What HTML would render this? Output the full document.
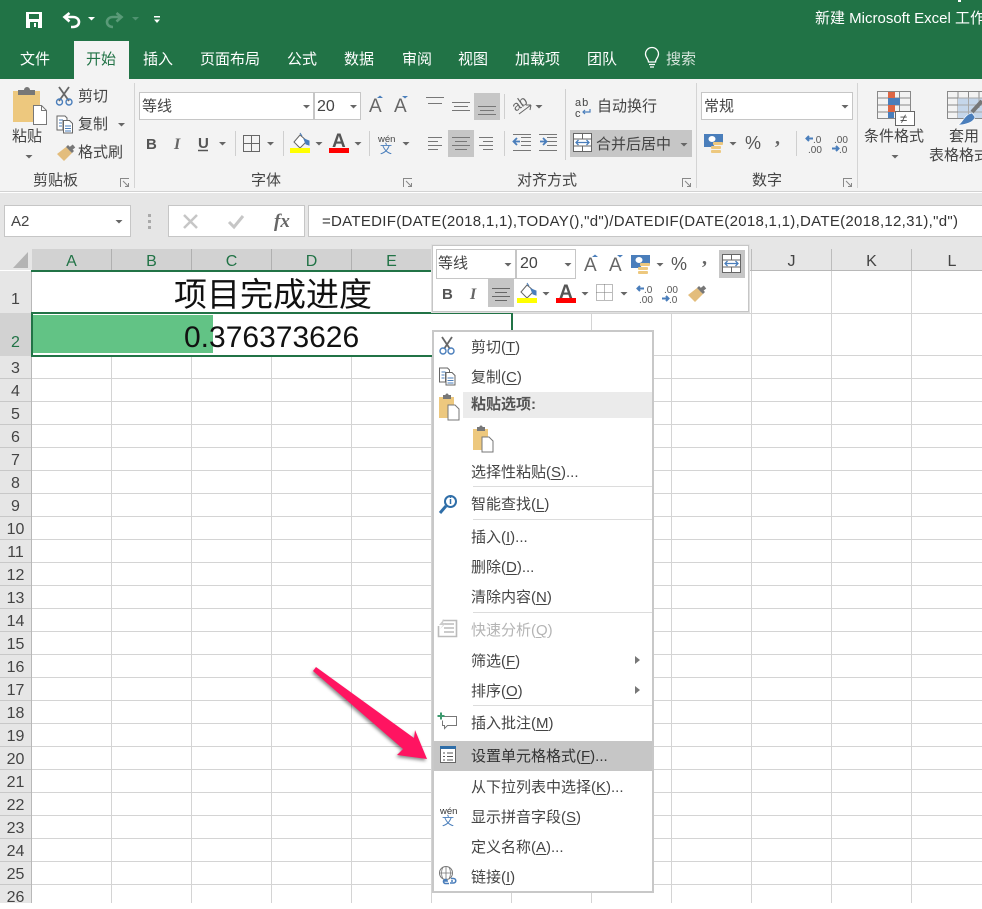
<!DOCTYPE html>
<html lang="zh"><head><meta charset="utf-8"><title>Excel</title>
<style>
html,body{margin:0;padding:0}
body{position:relative;width:982px;height:903px;overflow:hidden;background:#fff;font-family:"Liberation Sans","Noto Sans CJK SC",sans-serif;color:#444;font-size:15px}
.b{position:absolute;box-sizing:border-box}
.t{position:absolute;white-space:nowrap;line-height:20px;height:20px;margin-top:1px}
.w{color:#fff}
.box{background:#fff;border:1px solid #c6c6c6}
.on{background:#c6c6c6}
.cl{position:absolute;top:249px;height:21px;width:80px;text-align:center;line-height:25px;font-size:16px;color:#444;box-sizing:border-box;border-right:1px solid #bcbcbc}
.s{background:#d2d2d2;color:#217346;border-right:1px solid #b0b0b0}
.r{position:absolute;left:0;width:31px;text-align:center;font-size:16px;line-height:22px;height:22px;color:#444;margin-top:1px}
.m{position:absolute;left:471px;white-space:nowrap;line-height:20px;height:20px;color:#444;margin-top:2px}
.sep{position:absolute;left:473px;width:179px;height:1px;background:#dcdcdc}
u{text-underline-offset:2px}
</style></head><body>

<!-- grid -->
<div class="b" style="left:0;top:271px;width:982px;height:632px;background:repeating-linear-gradient(to right,transparent 0 31px,#d4d4d4 31px 32px,transparent 32px 111px,#d4d4d4 111px 112px,transparent 112px 191px,#d4d4d4 191px 192px,transparent 192px 271px,#d4d4d4 271px 272px,transparent 272px 351px,#d4d4d4 351px 352px,transparent 352px 431px,#d4d4d4 431px 432px,transparent 432px 511px,#d4d4d4 511px 512px,transparent 512px 591px,#d4d4d4 591px 592px,transparent 592px 671px,#d4d4d4 671px 672px,transparent 672px 751px,#d4d4d4 751px 752px,transparent 752px 831px,#d4d4d4 831px 832px,transparent 832px 911px,#d4d4d4 911px 912px,transparent 912px 982px)"></div>
<div class="b" style="left:0;top:356px;width:982px;height:547px;background:repeating-linear-gradient(to bottom,transparent 0 22px,#d4d4d4 22px 23px)"></div>
<div class="b" style="left:512px;top:313px;width:470px;height:1px;background:#d4d4d4"></div>
<div class="b" style="left:512px;top:355px;width:470px;height:1px;background:#d4d4d4"></div>
<div class="b" style="left:32px;top:271px;width:479px;height:42px;background:#fff"></div>

<!-- header strip -->
<div class="b" style="left:0;top:193px;width:982px;height:56px;background:#e6e6e6"></div>
<div class="b" style="left:0;top:249px;width:982px;height:21px;background:#e6e6e6"></div>
<div class="b" style="left:0;top:271px;width:31px;height:632px;background:#e6e6e6;border-right:1px solid #b8b8b8;box-sizing:content-box"></div>
<div class="b" style="left:0;top:313px;width:31px;height:43px;background:#d2d2d2"></div>
<div class="b" style="left:0;top:356px;width:31px;height:547px;background:repeating-linear-gradient(to bottom,transparent 0 22px,#c8c8c8 22px 23px)"></div>

<div class="cl s" style="left:32px">A</div><div class="cl s" style="left:112px">B</div><div class="cl s" style="left:192px">C</div><div class="cl s" style="left:272px">D</div><div class="cl s" style="left:352px">E</div>
<div class="cl" style="left:432px">F</div><div class="cl" style="left:512px">G</div><div class="cl" style="left:592px">H</div><div class="cl" style="left:672px">I</div><div class="cl" style="left:752px">J</div><div class="cl" style="left:832px">K</div><div class="cl" style="left:912px;border:0">L</div>
<div class="b" style="left:31px;top:270px;width:481px;height:2px;background:#217346"></div>
<div class="b" style="left:512px;top:270px;width:470px;height:1px;background:#b8b8b8"></div>

<div class="r" style="top:288px">1</div>
<div class="r" style="top:331px;color:#217346">2</div>
<div class="r" style="top:357px">3</div><div class="r" style="top:380px">4</div><div class="r" style="top:403px">5</div><div class="r" style="top:426px">6</div><div class="r" style="top:449px">7</div><div class="r" style="top:472px">8</div><div class="r" style="top:495px">9</div><div class="r" style="top:518px">10</div><div class="r" style="top:541px">11</div><div class="r" style="top:564px">12</div><div class="r" style="top:587px">13</div><div class="r" style="top:610px">14</div><div class="r" style="top:633px">15</div><div class="r" style="top:656px">16</div><div class="r" style="top:679px">17</div><div class="r" style="top:702px">18</div><div class="r" style="top:725px">19</div><div class="r" style="top:748px">20</div><div class="r" style="top:771px">21</div><div class="r" style="top:794px">22</div><div class="r" style="top:817px">23</div><div class="r" style="top:840px">24</div><div class="r" style="top:863px">25</div><div class="r" style="top:886px">26</div>

<!-- cells -->
<div class="t" style="left:174px;top:274px;line-height:40px;height:40px;font-size:33px;color:#111">项目完成进度</div>
<div class="b" style="left:31px;top:312px;width:482px;height:45px;border:2px solid #217346;background:#fff"></div>
<div class="b" style="left:33px;top:315px;width:180px;height:38px;background:#62c385"></div>
<div class="t" style="left:184px;top:317px;line-height:40px;height:40px;font-size:30px;color:#111">0.376373626</div>

<!-- title + tabs -->
<div class="b" style="left:0;top:0;width:982px;height:79px;background:#217346"></div>
<div class="b" style="left:958px;top:0;width:3px;height:2px;background:#fff"></div>
<div class="t w" style="left:815px;top:8px">新建 Microsoft Excel 工作簿</div>
<div class="b" style="left:74px;top:41px;width:55px;height:38px;background:#f3f3f3"></div>
<div class="t w" style="left:20px;top:49px">文件</div>
<div class="t" style="left:86px;top:49px;color:#217346">开始</div>
<div class="t w" style="left:143px;top:49px">插入</div>
<div class="t w" style="left:200px;top:49px">页面布局</div>
<div class="t w" style="left:287px;top:49px">公式</div>
<div class="t w" style="left:344px;top:49px">数据</div>
<div class="t w" style="left:402px;top:49px">审阅</div>
<div class="t w" style="left:458px;top:49px">视图</div>
<div class="t w" style="left:515px;top:49px">加载项</div>
<div class="t w" style="left:587px;top:49px">团队</div>
<div class="t" style="left:666px;top:49px;color:#d5e4db">搜索</div>

<!-- ribbon -->
<div class="b" style="left:0;top:79px;width:982px;height:113px;background:#f3f3f3;border-bottom:1px solid #d2d2d2"></div>
<div class="b" style="left:134px;top:83px;width:1px;height:105px;background:#d4d4d4"></div>
<div class="b" style="left:696px;top:83px;width:1px;height:105px;background:#d4d4d4"></div>
<div class="b" style="left:857px;top:83px;width:1px;height:105px;background:#d4d4d4"></div>
<div class="b" style="left:235px;top:131px;width:1px;height:25px;background:#cfcfcf"></div>
<div class="b" style="left:283px;top:131px;width:1px;height:25px;background:#cfcfcf"></div>
<div class="b" style="left:369px;top:131px;width:1px;height:25px;background:#cfcfcf"></div>
<div class="b" style="left:504px;top:94px;width:1px;height:25px;background:#cfcfcf"></div>
<div class="b" style="left:504px;top:131px;width:1px;height:25px;background:#cfcfcf"></div>
<div class="b" style="left:565px;top:89px;width:1px;height:71px;background:#cfcfcf"></div>
<div class="b" style="left:796px;top:131px;width:1px;height:25px;background:#cfcfcf"></div>

<div class="t" style="left:12px;top:126px">粘贴</div>
<div class="t" style="left:78px;top:86px">剪切</div>
<div class="t" style="left:78px;top:114px">复制</div>
<div class="t" style="left:78px;top:142px">格式刷</div>
<div class="t" style="left:33px;top:170px">剪贴板</div>
<div class="t" style="left:251px;top:170px">字体</div>
<div class="t" style="left:517px;top:170px">对齐方式</div>
<div class="t" style="left:752px;top:170px">数字</div>

<div class="b box" style="left:139px;top:92px;width:175px;height:28px"></div>
<div class="b box" style="left:314px;top:92px;width:47px;height:28px"></div>
<div class="t" style="left:142px;top:96px">等线</div>
<div class="t" style="left:317px;top:96px;font-size:16px">20</div>

<div class="b on" style="left:474px;top:93px;width:26px;height:27px"></div>
<div class="b on" style="left:448px;top:130px;width:26px;height:27px"></div>
<div class="b on" style="left:570px;top:130px;width:122px;height:27px"></div>
<div class="t" style="left:597px;top:96px">自动换行</div>
<div class="t" style="left:596px;top:134px">合并后居中</div>
<div class="b box" style="left:701px;top:92px;width:152px;height:28px"></div>
<div class="t" style="left:704px;top:96px">常规</div>
<div class="t" style="left:745px;top:132px;font-size:18px;color:#555">%</div>
<div class="t" style="left:864px;top:126px">条件格式</div>
<div class="t" style="left:949px;top:126px">套用</div>
<div class="t" style="left:929px;top:145px">表格格式</div>

<!-- formula bar -->
<div class="b box" style="left:4px;top:205px;width:127px;height:32px"></div>
<div class="t" style="left:11px;top:211px;font-size:15px">A2</div>
<div class="b box" style="left:168px;top:205px;width:137px;height:32px"></div>
<div class="b box" style="left:308px;top:205px;width:680px;height:32px"></div>

<!-- mini toolbar -->
<div class="b" style="left:432px;top:245px;width:317px;height:67px;background:#fff;border:1px solid #c6c6c6;box-shadow:0 0 0 1px #e0e0e0"></div>
<div class="b box" style="left:436px;top:249px;width:80px;height:30px"></div>
<div class="b box" style="left:516px;top:249px;width:60px;height:30px"></div>
<div class="t" style="left:438px;top:253px">等线</div>
<div class="t" style="left:520px;top:253px;font-size:16px">20</div>
<div class="b on" style="left:719px;top:250px;width:26px;height:28px"></div>
<div class="b on" style="left:488px;top:279px;width:26px;height:28px"></div>
<div class="t" style="left:671px;top:253px;font-size:18px;color:#555">%</div>

<!-- context menu -->
<div class="b" style="left:432px;top:330px;width:222px;height:563px;background:#fff;border:2px solid #c8c8c8"></div>
<div class="b" style="left:463px;top:392px;width:189px;height:26px;background:#ebebeb"></div>
<div class="b" style="left:434px;top:741px;width:218px;height:30px;background:#c6c6c6"></div>
<div class="sep" style="top:486px"></div><div class="sep" style="top:519px"></div><div class="sep" style="top:612px"></div><div class="sep" style="top:705px"></div>
<div class="m" style="top:336px">剪切(<u>T</u>)</div>
<div class="m" style="top:366px">复制(<u>C</u>)</div>
<div class="m" style="top:393px;font-weight:bold;color:#555">粘贴选项:</div>
<div class="m" style="top:461px">选择性粘贴(<u>S</u>)...</div>
<div class="m" style="top:493px">智能查找(<u>L</u>)</div>
<div class="m" style="top:526px">插入(<u>I</u>)...</div>
<div class="m" style="top:556px">删除(<u>D</u>)...</div>
<div class="m" style="top:586px">清除内容(<u>N</u>)</div>
<div class="m" style="top:619px;color:#b4b4b4">快速分析(<u>Q</u>)</div>
<div class="m" style="top:650px">筛选(<u>F</u>)</div>
<div class="m" style="top:680px">排序(<u>O</u>)</div>
<div class="m" style="top:712px">插入批注(<u>M</u>)</div>
<div class="m" style="top:745px;color:#333">设置单元格格式(<u>F</u>)...</div>
<div class="m" style="top:776px">从下拉列表中选择(<u>K</u>)...</div>
<div class="m" style="top:806px">显示拼音字段(<u>S</u>)</div>
<div class="m" style="top:836px">定义名称(<u>A</u>)...</div>
<div class="m" style="top:866px">链接(<u>I</u>)</div>

<!-- icons -->
<svg class="b" style="left:0;top:0" width="982" height="903" viewBox="0 0 982 903" font-family="Liberation Sans,Noto Sans CJK SC,sans-serif">
<defs>
<path id="c" d="M0 0h7l-3.5 3.5z" fill="#666"/>
<g id="brush"><path d="M12 5l5-4" stroke="#777" stroke-width="4" fill="none"/><path d="M0 9l9-7 6 6-8 8z" fill="#e3bd7c"/><path d="M9 2l6 6 2-2-6-6z" fill="#777"/></g>
<g id="clip"><path d="M0 4h15v21H0z" fill="#edc87e"/><path d="M4 2h2.500a1.500 1.500 0 0 1 3 0H12v4H4z" fill="#777"/><path d="M9 12h7l4 4v11H9z" fill="#fff" stroke="#777"/></g>
<g id="money"><path d="M0 0h19v10h-8l-2 3H0z" fill="#4a7ebb"/><ellipse cx="8" cy="5" rx="3.500" ry="3" fill="#fff"/><g fill="#edc87e"><rect x="9" y="8" width="10" height="3" rx="1"/><rect x="7" y="12" width="10" height="3" rx="1"/><rect x="7" y="16" width="10" height="3" rx="1"/></g></g>
<g id="merge"><path d="M.5.5h18v18H.5z" fill="#fff"/><path d="M.5.5h18v18H.5zM.5 6h18M.5 13h18M9.500.5V6M9.500 13v5.500" fill="none" stroke="#666"/><path d="M3 9.500h13M5.500 7l-2.500 2.500 2.500 2.500M13.500 7l2.500 2.500-2.500 2.500" fill="none" stroke="#4a7ebb" stroke-width="1.300"/></g>
<g id="dec1" font-size="10" fill="#555"><path d="M8 3.500H1.500M4 1L1.500 3.500 4 6" fill="none" stroke="#4a7ebb" stroke-width="2"/><text x="8" y="8">.0</text><text x="3" y="18">.00</text></g>
<g id="dec2" font-size="10" fill="#555"><text x="3" y="8">.00</text><path d="M1 13.500h6.500M5 11l2.500 2.500L5 16" fill="none" stroke="#4a7ebb" stroke-width="2"/><text x="8" y="18">.0</text></g>
<g id="fill"><path d="M8 2l-6 7 6 6 7-7z" fill="#fff" stroke="#666"/><path d="M8 0l2 3M12 6l5 2 0 4-3-1z" fill="#4a7ebb" stroke="#4a7ebb"/></g>
</defs>

<!-- QAT -->
<path fill="#fff" fill-rule="evenodd" d="M26 12h16v16H26zM29 14v5h10v-5zM30 22v6h8v-6z"/>
<path d="M34 23h2v4h-2z" fill="#fff"/>
<path d="M66 17h7c4 0 6 2.500 6 5s-2 5-6 5h-2M69.500 13l-5 4 5 4.500" fill="none" stroke="#fff" stroke-width="2.600"/>
<path d="M88 17h7l-3.500 3.500z" fill="#fff"/>
<path d="M120 17h-7c-4 0-6 2.500-6 5s2 5 6 5h0M116.500 13l5 4-5 4.500" fill="none" stroke="#5a9a78" stroke-width="2.600"/>
<path d="M132 17h7l-3.500 3.500z" fill="#4f9270"/>
<path d="M154 16h6v1.500h-6zM154 19.500h6l-3 3.500z" fill="#fff"/>
<!-- bulb -->
<path d="M648.500 62c0-3-3-4.500-3-8a6.500 6.500 0 0 1 13 0c0 3.500-3 5-3 8zM649 64.500h6M650 67h4" fill="none" stroke="#fff" stroke-width="1.300"/>

<!-- paste -->
<path d="M13 91h27v31H13z" fill="#edc87e"/>
<path d="M18 90h6a3 3 0 0 1 6 0h5v5H18z" fill="#777"/>
<path d="M33.500 105.500h8l5 5v14h-13z" fill="#fff" stroke="#777"/>
<path d="M41.500 105.500v5h5" fill="none" stroke="#777"/>
<use href="#c" x="25.500" y="155"/>
<!-- scissors -->
<path d="M59 87l10 14M69 87L59 101" stroke="#666" stroke-width="1.800" fill="none"/>
<circle cx="59.500" cy="102" r="3" fill="none" stroke="#4a7ebb" stroke-width="1.400"/><circle cx="69" cy="102" r="3" fill="none" stroke="#4a7ebb" stroke-width="1.400"/>
<!-- copy -->
<path d="M57 116h8l2 2v3h-4v9h-6z" fill="#fff" stroke="#666"/><path d="M63.500 120.500h6l3 3v9.500h-9z" fill="#fff" stroke="#666"/>
<path d="M65 126h6M65 128.500h6M65 131h6M59 120h4M59 123h3M59 126h3" stroke="#4a7ebb"/>
<use href="#c" x="118" y="123"/>
<use href="#brush" x="57" y="145"/>
<!-- launchers -->
<g fill="none" stroke="#888"><path d="M120.500 187v-8.500h8.500M123 181l5 5M128.500 183v3.500H125"/><path d="M403.500 187v-8.500h8.500M406 181l5 5M411.500 183v3.500H408M682.500 187v-8.500h8.500M685 181l5 5M690.500 183v3.500H687M843.500 187v-8.500h8.500M846 181l5 5M851.500 183v3.500H848"/></g>

<!-- font row -->
<use href="#c" x="303" y="105"/><use href="#c" x="350" y="105"/>
<text x="369" y="112" font-size="19" fill="#666">A</text><path d="M377 98l3-2.500 3 2.500z" fill="#4a7ebb"/>
<text x="394" y="112" font-size="19" fill="#666">A</text><path d="M402 96h6l-3 2.500z" fill="#4a7ebb"/>
<text x="146" y="149" font-size="15" font-weight="bold" fill="#555">B</text>
<text x="174" y="149" font-size="16" font-style="italic" font-weight="bold" fill="#666" font-family="Liberation Serif">I</text>
<text x="198" y="148" font-size="15" font-weight="bold" fill="#555">U</text><path d="M198 150.500h10" stroke="#555" stroke-width="1.500"/>
<use href="#c" x="219" y="142"/>
<path d="M243.500 135.500h16v16h-16zM251.500 135.500v16M243.500 143.500h16" fill="none" stroke="#666"/>
<use href="#c" x="267" y="142"/>
<use href="#fill" x="292" y="133"/><path d="M290 148h20v5h-20z" fill="#ff0"/>
<use href="#c" x="315.500" y="142"/>
<text x="332" y="147" font-size="19" font-weight="bold" fill="#555">A</text><path d="M329 148h20v5h-20z" fill="#f00"/>
<use href="#c" x="354.500" y="142"/>
<text x="378" y="142" font-size="9.500" fill="#444">wén</text><text x="380" y="153" font-size="12" fill="#4a7ebb">文</text>
<use href="#c" x="402.500" y="142"/>

<!-- align -->
<g fill="none" stroke="#777">
<path d="M426 97.500h18M428 103.500h14"/>
<path d="M452 102.500h18M454 106.500h14M452 110.500h18"/>
<path d="M478 106.500h18M480 110.500h14M478 114.500h18"/>
<path d="M428 137.500h14M428 141.500h10M428 145.500h14M428 149.500h10"/>
<path d="M452 137.500h18M455 141.500h12M452 145.500h18M455 149.500h12"/>
<path d="M479 137.500h14M483 141.500h10M479 145.500h14M483 149.500h10"/>
<path d="M521 137.500h10M521 141.500h10M521 145.500h10M513 150.500h18M513 134.500h18M547 137.500h10M547 141.500h10M547 145.500h10M539 150.500h18M539 134.500h18"/>
</g>
<path d="M520 141.500h-6M517 138l-3.500 3.500 3.500 3.500" fill="none" stroke="#4a7ebb" stroke-width="1.800"/>
<path d="M540 141.500h6M543 138l3.500 3.500-3.500 3.500" fill="none" stroke="#4a7ebb" stroke-width="1.800"/>
<text x="512" y="108" font-size="14" fill="#666" transform="rotate(-35 520 104)">ab</text>
<path d="M519 114l12-9M531 105l-5 0M531 105l-1 5" fill="none" stroke="#666"/>
<use href="#c" x="535.500" y="105"/>
<text x="575" y="106" font-size="11" fill="#444" letter-spacing="1">ab</text><text x="575" y="117" font-size="11" fill="#444">c</text>
<path d="M590 109v3h-7M585 110l-2 2 2 2" fill="none" stroke="#4a7ebb" stroke-width="1.200"/>
<use href="#merge" x="573" y="133"/>
<use href="#c" x="680.500" y="143"/>

<!-- number -->
<use href="#c" x="841.500" y="105"/>
<use href="#money" x="704" y="134"/>
<use href="#c" x="729.500" y="142"/>
<text x="775" y="144" font-size="20" font-weight="bold" fill="#666" font-family="Liberation Serif">,</text>
<use href="#dec1" x="805" y="135"/><use href="#dec2" x="831" y="135"/>

<!-- CF -->
<path d="M877.500 91.500h33v27h-33zM877.500 98h33M877.500 105h33M877.500 112h33M888.500 91.500v27M899.500 91.500v27" fill="none" stroke="#888"/>
<path d="M888 92h7v6h-7zM888 105h7v7h-7z" fill="#dd6644"/><path d="M888 98h12v7h-12zM888 112h6v6h-6z" fill="#4a7ebb"/>
<path d="M895.500 111.500h19v14h-19z" fill="#fff" stroke="#666"/>
<text x="900" y="123" font-size="13" fill="#444">≠</text>
<use href="#c" x="891.500" y="155"/>
<!-- table style -->
<path d="M947.500 91.500h40v27h-40zM947.500 98h40M947.500 105h40M947.500 112h40M958 91.500v27M968.500 91.500v27M979 91.500v27" fill="none" stroke="#888"/>
<path d="M958 98h24v20h-24z" fill="#c5d6ea"/>
<path d="M958 98h24M958 105h24M958 112h24M968.500 98v20M979 98v10" stroke="#a8a8a8" fill="none"/>
<path d="M972 112l10-11" stroke="#777" stroke-width="4"/>
<path d="M957 125c6-1 6-10 15-12l3 4c-1 5-9 8-18 8z" fill="#4a7ebb" stroke="#fff" stroke-width=".6"/>

<!-- formula bar -->
<use href="#c" x="115.500" y="220"/>
<path d="M148 214h3v3h-3zM148 220h3v3h-3zM148 226h3v3h-3z" fill="#aaa"/>
<path d="M184 215l13 13M197 215l-13 13" stroke="#c6c6c6" stroke-width="2.500" fill="none"/>
<path d="M229 222l5 5 9-11" stroke="#c6c6c6" stroke-width="3" fill="none"/>
<text x="274" y="227" font-size="19" font-style="italic" font-weight="bold" fill="#666" font-family="Liberation Serif">fx</text>
<text x="322" y="226" font-size="15" fill="#333" textLength="636" lengthAdjust="spacing">=DATEDIF(DATE(2018,1,1),TODAY(),"d")/DATEDIF(DATE(2018,1,1),DATE(2018,12,31),"d")</text>

<!-- corner -->
<path d="M28 252v16H13z" fill="#b4b4b4"/>

<!-- mini toolbar -->
<use href="#c" x="504.500" y="263"/><use href="#c" x="564.500" y="263"/>
<text x="584" y="271" font-size="19" fill="#666">A</text><path d="M592 257l3-2.500 3 2.500z" fill="#4a7ebb"/>
<text x="609" y="271" font-size="19" fill="#666">A</text><path d="M617 255h6l-3 2.500z" fill="#4a7ebb"/>
<use href="#money" x="631" y="255"/>
<use href="#c" x="656.500" y="263"/>
<text x="702" y="264" font-size="20" font-weight="bold" fill="#666" font-family="Liberation Serif">,</text>
<use href="#merge" x="722" y="254"/>
<text x="442" y="299" font-size="15" font-weight="bold" fill="#555">B</text>
<text x="470" y="299" font-size="16" font-style="italic" font-weight="bold" fill="#666" font-family="Liberation Serif">I</text>
<path d="M492 288.500h18M495 292.500h12M492 296.500h18M495 300.500h12" fill="none" stroke="#666"/>
<use href="#fill" x="519" y="283"/><path d="M517 298h20v5h-20z" fill="#ff0"/>
<use href="#c" x="542.500" y="292"/>
<text x="559" y="298" font-size="19" font-weight="bold" fill="#555">A</text><path d="M556 298h20v5h-20z" fill="#f00"/>
<use href="#c" x="581.500" y="292"/>
<path d="M596.500 284.500h16v16h-16zM604.500 284.500v16M596.500 292.500h16" fill="none" stroke="#777" stroke-dasharray="1 1"/>
<use href="#c" x="620.500" y="292"/>
<use href="#dec1" x="636" y="285"/><use href="#dec2" x="661" y="285"/>
<use href="#brush" x="688" y="286"/>

<!-- menu icons -->
<path d="M442 337l8 12M452 337l-8 12" stroke="#666" stroke-width="1.800" fill="none"/>
<circle cx="443" cy="351" r="3" fill="none" stroke="#4a7ebb" stroke-width="1.400"/><circle cx="451" cy="351" r="3" fill="none" stroke="#4a7ebb" stroke-width="1.400"/>
<path d="M439.500 368h8l2 2v3h-4v9h-6z" fill="#fff" stroke="#666"/><path d="M446 372.500h6l3 3v9.500h-9z" fill="#fff" stroke="#666"/>
<path d="M447.500 378h6M447.500 380.500h6M447.500 383h6M441.500 372h4M441.500 375h3M441.500 378h3" stroke="#4a7ebb"/>
<use href="#clip" x="439" y="393"/>
<use href="#clip" x="473" y="425"/>
<circle cx="450.500" cy="501.500" r="5.500" fill="#fff" stroke="#2f6ea8" stroke-width="2"/><path d="M446 506l-6 7" stroke="#2f6ea8" stroke-width="3"/><path d="M450.500 499v5M450.500 497v1" stroke="#2f6ea8" stroke-width="1.500"/>
<path d="M438.500 626v10.500h18v-16h-14M444 624h10M444 628h10M444 632h10" fill="none" stroke="#bbb" stroke-width="1.600"/><path d="M444 619l-5 6h4l-3 4 6-6h-3z" fill="#ccc"/>
<path d="M635 656l5 4-5 4zM635 686l5 4-5 4z" fill="#777"/>
<path d="M444 716.500h12.500v9h-9l-3 3v-3h-2v-5" fill="none" stroke="#777"/>
<path d="M441 712.500v7M437.500 716h7" stroke="#3c9a6e" stroke-width="2"/>
<path d="M440.500 746.500h15v16h-15z" fill="#fff" stroke="#666"/><path d="M440 746h16v3h-16z" fill="#2f6ea8"/>
<path d="M447 753h6M447 756.500h6M447 760h6M443 753h2M443 756.500h2M443 760h2" stroke="#555"/>
<text x="440" y="814" font-size="9.500" fill="#333">wén</text><text x="442" y="825" font-size="12" fill="#4a7ebb">文</text>
<circle cx="446" cy="873" r="6.500" fill="none" stroke="#777"/><path d="M439.500 873h13M446 866.500v13M443 867c-2 4-2 8 0 12M449 867c2 4 2 8 0 12" fill="none" stroke="#777" stroke-width=".8"/>
<path d="M444 881h4M453 881h-2M447 879.500h-1.500a2 2 0 0 0 0 4H449M451 878.500h2.500a2.200 2.200 0 0 1 0 4.500H450" fill="none" stroke="#4a7ebb" stroke-width="1.600"/>

<!-- arrow -->
<path d="M313 671L316 667L414 738L415 730L427 759L397 755L403 749z" fill="#ff1461" style="filter:drop-shadow(-1px 2px 1.500px rgba(0,0,0,.45))"/>
</svg>
</body></html>
